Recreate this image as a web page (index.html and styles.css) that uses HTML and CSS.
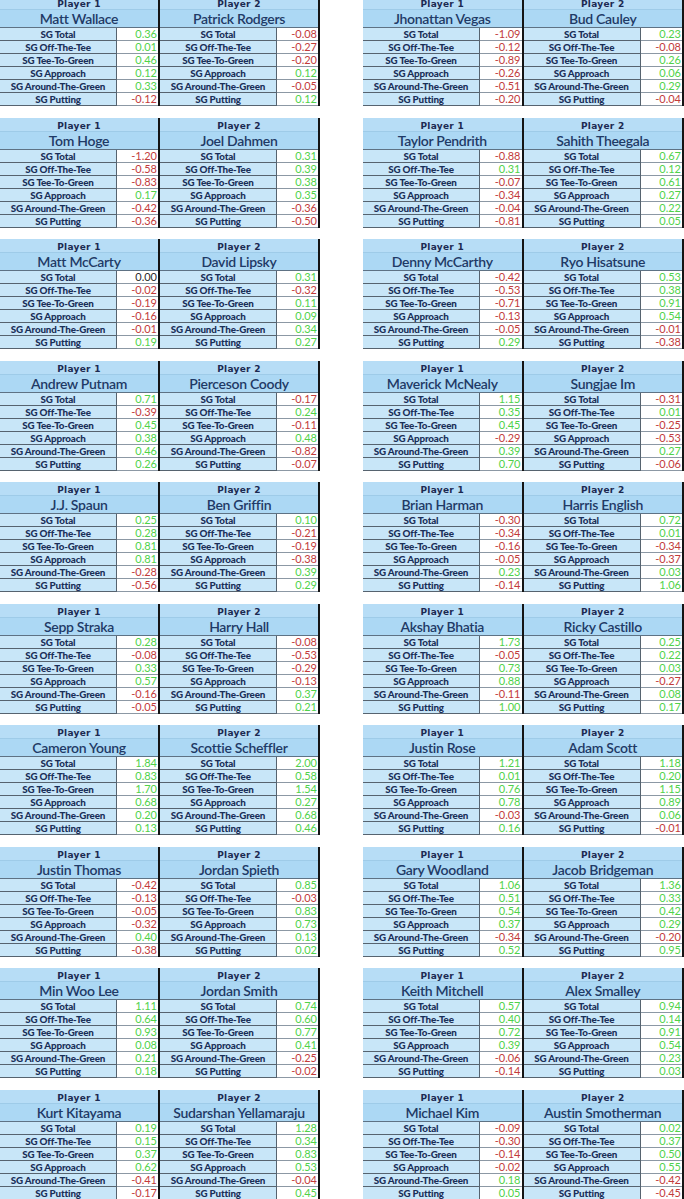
FILE: index.html
```html
<!DOCTYPE html>
<html>
<head>
<meta charset="utf-8">
<link rel="stylesheet" href="styles.css">
</head>
<body>
<div class="page">

<div class="pair">
 <div class="match">
  <div class="player"><div class="ph">Player 1</div><div class="pn">Matt Wallace</div>
   <div class="st"><span class="lb">SG Total</span><span class="v g">0.36</span></div>
   <div class="st"><span class="lb">SG Off-The-Tee</span><span class="v g">0.01</span></div>
   <div class="st"><span class="lb">SG Tee-To-Green</span><span class="v g">0.46</span></div>
   <div class="st"><span class="lb">SG Approach</span><span class="v g">0.12</span></div>
   <div class="st"><span class="lb">SG Around-The-Green</span><span class="v g">0.33</span></div>
   <div class="st"><span class="lb">SG Putting</span><span class="v r">-0.12</span></div>
  </div>
  <div class="player"><div class="ph">Player 2</div><div class="pn">Patrick Rodgers</div>
   <div class="st"><span class="lb">SG Total</span><span class="v r">-0.08</span></div>
   <div class="st"><span class="lb">SG Off-The-Tee</span><span class="v r">-0.27</span></div>
   <div class="st"><span class="lb">SG Tee-To-Green</span><span class="v r">-0.20</span></div>
   <div class="st"><span class="lb">SG Approach</span><span class="v g">0.12</span></div>
   <div class="st"><span class="lb">SG Around-The-Green</span><span class="v r">-0.05</span></div>
   <div class="st"><span class="lb">SG Putting</span><span class="v g">0.12</span></div>
  </div>
 </div>
 <div class="match right">
  <div class="player"><div class="ph">Player 1</div><div class="pn">Jhonattan Vegas</div>
   <div class="st"><span class="lb">SG Total</span><span class="v r">-1.09</span></div>
   <div class="st"><span class="lb">SG Off-The-Tee</span><span class="v r">-0.12</span></div>
   <div class="st"><span class="lb">SG Tee-To-Green</span><span class="v r">-0.89</span></div>
   <div class="st"><span class="lb">SG Approach</span><span class="v r">-0.26</span></div>
   <div class="st"><span class="lb">SG Around-The-Green</span><span class="v r">-0.51</span></div>
   <div class="st"><span class="lb">SG Putting</span><span class="v r">-0.20</span></div>
  </div>
  <div class="player"><div class="ph">Player 2</div><div class="pn">Bud Cauley</div>
   <div class="st"><span class="lb">SG Total</span><span class="v g">0.23</span></div>
   <div class="st"><span class="lb">SG Off-The-Tee</span><span class="v r">-0.08</span></div>
   <div class="st"><span class="lb">SG Tee-To-Green</span><span class="v g">0.26</span></div>
   <div class="st"><span class="lb">SG Approach</span><span class="v g">0.06</span></div>
   <div class="st"><span class="lb">SG Around-The-Green</span><span class="v g">0.29</span></div>
   <div class="st"><span class="lb">SG Putting</span><span class="v r">-0.04</span></div>
  </div>
 </div>
</div>

<div class="pair">
 <div class="match">
  <div class="player"><div class="ph">Player 1</div><div class="pn">Tom Hoge</div>
   <div class="st"><span class="lb">SG Total</span><span class="v r">-1.20</span></div>
   <div class="st"><span class="lb">SG Off-The-Tee</span><span class="v r">-0.58</span></div>
   <div class="st"><span class="lb">SG Tee-To-Green</span><span class="v r">-0.83</span></div>
   <div class="st"><span class="lb">SG Approach</span><span class="v g">0.17</span></div>
   <div class="st"><span class="lb">SG Around-The-Green</span><span class="v r">-0.42</span></div>
   <div class="st"><span class="lb">SG Putting</span><span class="v r">-0.36</span></div>
  </div>
  <div class="player"><div class="ph">Player 2</div><div class="pn">Joel Dahmen</div>
   <div class="st"><span class="lb">SG Total</span><span class="v g">0.31</span></div>
   <div class="st"><span class="lb">SG Off-The-Tee</span><span class="v g">0.39</span></div>
   <div class="st"><span class="lb">SG Tee-To-Green</span><span class="v g">0.38</span></div>
   <div class="st"><span class="lb">SG Approach</span><span class="v g">0.35</span></div>
   <div class="st"><span class="lb">SG Around-The-Green</span><span class="v r">-0.36</span></div>
   <div class="st"><span class="lb">SG Putting</span><span class="v r">-0.50</span></div>
  </div>
 </div>
 <div class="match right">
  <div class="player"><div class="ph">Player 1</div><div class="pn">Taylor Pendrith</div>
   <div class="st"><span class="lb">SG Total</span><span class="v r">-0.88</span></div>
   <div class="st"><span class="lb">SG Off-The-Tee</span><span class="v g">0.31</span></div>
   <div class="st"><span class="lb">SG Tee-To-Green</span><span class="v r">-0.07</span></div>
   <div class="st"><span class="lb">SG Approach</span><span class="v r">-0.34</span></div>
   <div class="st"><span class="lb">SG Around-The-Green</span><span class="v r">-0.04</span></div>
   <div class="st"><span class="lb">SG Putting</span><span class="v r">-0.81</span></div>
  </div>
  <div class="player"><div class="ph">Player 2</div><div class="pn">Sahith Theegala</div>
   <div class="st"><span class="lb">SG Total</span><span class="v g">0.67</span></div>
   <div class="st"><span class="lb">SG Off-The-Tee</span><span class="v g">0.12</span></div>
   <div class="st"><span class="lb">SG Tee-To-Green</span><span class="v g">0.61</span></div>
   <div class="st"><span class="lb">SG Approach</span><span class="v g">0.27</span></div>
   <div class="st"><span class="lb">SG Around-The-Green</span><span class="v g">0.22</span></div>
   <div class="st"><span class="lb">SG Putting</span><span class="v g">0.05</span></div>
  </div>
 </div>
</div>

<div class="pair">
 <div class="match">
  <div class="player"><div class="ph">Player 1</div><div class="pn">Matt McCarty</div>
   <div class="st"><span class="lb">SG Total</span><span class="v k">0.00</span></div>
   <div class="st"><span class="lb">SG Off-The-Tee</span><span class="v r">-0.02</span></div>
   <div class="st"><span class="lb">SG Tee-To-Green</span><span class="v r">-0.19</span></div>
   <div class="st"><span class="lb">SG Approach</span><span class="v r">-0.16</span></div>
   <div class="st"><span class="lb">SG Around-The-Green</span><span class="v r">-0.01</span></div>
   <div class="st"><span class="lb">SG Putting</span><span class="v g">0.19</span></div>
  </div>
  <div class="player"><div class="ph">Player 2</div><div class="pn">David Lipsky</div>
   <div class="st"><span class="lb">SG Total</span><span class="v g">0.31</span></div>
   <div class="st"><span class="lb">SG Off-The-Tee</span><span class="v r">-0.32</span></div>
   <div class="st"><span class="lb">SG Tee-To-Green</span><span class="v g">0.11</span></div>
   <div class="st"><span class="lb">SG Approach</span><span class="v g">0.09</span></div>
   <div class="st"><span class="lb">SG Around-The-Green</span><span class="v g">0.34</span></div>
   <div class="st"><span class="lb">SG Putting</span><span class="v g">0.27</span></div>
  </div>
 </div>
 <div class="match right">
  <div class="player"><div class="ph">Player 1</div><div class="pn">Denny McCarthy</div>
   <div class="st"><span class="lb">SG Total</span><span class="v r">-0.42</span></div>
   <div class="st"><span class="lb">SG Off-The-Tee</span><span class="v r">-0.53</span></div>
   <div class="st"><span class="lb">SG Tee-To-Green</span><span class="v r">-0.71</span></div>
   <div class="st"><span class="lb">SG Approach</span><span class="v r">-0.13</span></div>
   <div class="st"><span class="lb">SG Around-The-Green</span><span class="v r">-0.05</span></div>
   <div class="st"><span class="lb">SG Putting</span><span class="v g">0.29</span></div>
  </div>
  <div class="player"><div class="ph">Player 2</div><div class="pn">Ryo Hisatsune</div>
   <div class="st"><span class="lb">SG Total</span><span class="v g">0.53</span></div>
   <div class="st"><span class="lb">SG Off-The-Tee</span><span class="v g">0.38</span></div>
   <div class="st"><span class="lb">SG Tee-To-Green</span><span class="v g">0.91</span></div>
   <div class="st"><span class="lb">SG Approach</span><span class="v g">0.54</span></div>
   <div class="st"><span class="lb">SG Around-The-Green</span><span class="v r">-0.01</span></div>
   <div class="st"><span class="lb">SG Putting</span><span class="v r">-0.38</span></div>
  </div>
 </div>
</div>

<div class="pair">
 <div class="match">
  <div class="player"><div class="ph">Player 1</div><div class="pn">Andrew Putnam</div>
   <div class="st"><span class="lb">SG Total</span><span class="v g">0.71</span></div>
   <div class="st"><span class="lb">SG Off-The-Tee</span><span class="v r">-0.39</span></div>
   <div class="st"><span class="lb">SG Tee-To-Green</span><span class="v g">0.45</span></div>
   <div class="st"><span class="lb">SG Approach</span><span class="v g">0.38</span></div>
   <div class="st"><span class="lb">SG Around-The-Green</span><span class="v g">0.46</span></div>
   <div class="st"><span class="lb">SG Putting</span><span class="v g">0.26</span></div>
  </div>
  <div class="player"><div class="ph">Player 2</div><div class="pn">Pierceson Coody</div>
   <div class="st"><span class="lb">SG Total</span><span class="v r">-0.17</span></div>
   <div class="st"><span class="lb">SG Off-The-Tee</span><span class="v g">0.24</span></div>
   <div class="st"><span class="lb">SG Tee-To-Green</span><span class="v r">-0.11</span></div>
   <div class="st"><span class="lb">SG Approach</span><span class="v g">0.48</span></div>
   <div class="st"><span class="lb">SG Around-The-Green</span><span class="v r">-0.82</span></div>
   <div class="st"><span class="lb">SG Putting</span><span class="v r">-0.07</span></div>
  </div>
 </div>
 <div class="match right">
  <div class="player"><div class="ph">Player 1</div><div class="pn">Maverick McNealy</div>
   <div class="st"><span class="lb">SG Total</span><span class="v g">1.15</span></div>
   <div class="st"><span class="lb">SG Off-The-Tee</span><span class="v g">0.35</span></div>
   <div class="st"><span class="lb">SG Tee-To-Green</span><span class="v g">0.45</span></div>
   <div class="st"><span class="lb">SG Approach</span><span class="v r">-0.29</span></div>
   <div class="st"><span class="lb">SG Around-The-Green</span><span class="v g">0.39</span></div>
   <div class="st"><span class="lb">SG Putting</span><span class="v g">0.70</span></div>
  </div>
  <div class="player"><div class="ph">Player 2</div><div class="pn">Sungjae Im</div>
   <div class="st"><span class="lb">SG Total</span><span class="v r">-0.31</span></div>
   <div class="st"><span class="lb">SG Off-The-Tee</span><span class="v g">0.01</span></div>
   <div class="st"><span class="lb">SG Tee-To-Green</span><span class="v r">-0.25</span></div>
   <div class="st"><span class="lb">SG Approach</span><span class="v r">-0.53</span></div>
   <div class="st"><span class="lb">SG Around-The-Green</span><span class="v g">0.27</span></div>
   <div class="st"><span class="lb">SG Putting</span><span class="v r">-0.06</span></div>
  </div>
 </div>
</div>

<div class="pair">
 <div class="match">
  <div class="player"><div class="ph">Player 1</div><div class="pn">J.J. Spaun</div>
   <div class="st"><span class="lb">SG Total</span><span class="v g">0.25</span></div>
   <div class="st"><span class="lb">SG Off-The-Tee</span><span class="v g">0.28</span></div>
   <div class="st"><span class="lb">SG Tee-To-Green</span><span class="v g">0.81</span></div>
   <div class="st"><span class="lb">SG Approach</span><span class="v g">0.81</span></div>
   <div class="st"><span class="lb">SG Around-The-Green</span><span class="v r">-0.28</span></div>
   <div class="st"><span class="lb">SG Putting</span><span class="v r">-0.56</span></div>
  </div>
  <div class="player"><div class="ph">Player 2</div><div class="pn">Ben Griffin</div>
   <div class="st"><span class="lb">SG Total</span><span class="v g">0.10</span></div>
   <div class="st"><span class="lb">SG Off-The-Tee</span><span class="v r">-0.21</span></div>
   <div class="st"><span class="lb">SG Tee-To-Green</span><span class="v r">-0.19</span></div>
   <div class="st"><span class="lb">SG Approach</span><span class="v r">-0.38</span></div>
   <div class="st"><span class="lb">SG Around-The-Green</span><span class="v g">0.39</span></div>
   <div class="st"><span class="lb">SG Putting</span><span class="v g">0.29</span></div>
  </div>
 </div>
 <div class="match right">
  <div class="player"><div class="ph">Player 1</div><div class="pn">Brian Harman</div>
   <div class="st"><span class="lb">SG Total</span><span class="v r">-0.30</span></div>
   <div class="st"><span class="lb">SG Off-The-Tee</span><span class="v r">-0.34</span></div>
   <div class="st"><span class="lb">SG Tee-To-Green</span><span class="v r">-0.16</span></div>
   <div class="st"><span class="lb">SG Approach</span><span class="v r">-0.05</span></div>
   <div class="st"><span class="lb">SG Around-The-Green</span><span class="v g">0.23</span></div>
   <div class="st"><span class="lb">SG Putting</span><span class="v r">-0.14</span></div>
  </div>
  <div class="player"><div class="ph">Player 2</div><div class="pn">Harris English</div>
   <div class="st"><span class="lb">SG Total</span><span class="v g">0.72</span></div>
   <div class="st"><span class="lb">SG Off-The-Tee</span><span class="v g">0.01</span></div>
   <div class="st"><span class="lb">SG Tee-To-Green</span><span class="v r">-0.34</span></div>
   <div class="st"><span class="lb">SG Approach</span><span class="v r">-0.37</span></div>
   <div class="st"><span class="lb">SG Around-The-Green</span><span class="v g">0.03</span></div>
   <div class="st"><span class="lb">SG Putting</span><span class="v g">1.06</span></div>
  </div>
 </div>
</div>

<div class="pair">
 <div class="match">
  <div class="player"><div class="ph">Player 1</div><div class="pn">Sepp Straka</div>
   <div class="st"><span class="lb">SG Total</span><span class="v g">0.28</span></div>
   <div class="st"><span class="lb">SG Off-The-Tee</span><span class="v r">-0.08</span></div>
   <div class="st"><span class="lb">SG Tee-To-Green</span><span class="v g">0.33</span></div>
   <div class="st"><span class="lb">SG Approach</span><span class="v g">0.57</span></div>
   <div class="st"><span class="lb">SG Around-The-Green</span><span class="v r">-0.16</span></div>
   <div class="st"><span class="lb">SG Putting</span><span class="v r">-0.05</span></div>
  </div>
  <div class="player"><div class="ph">Player 2</div><div class="pn">Harry Hall</div>
   <div class="st"><span class="lb">SG Total</span><span class="v r">-0.08</span></div>
   <div class="st"><span class="lb">SG Off-The-Tee</span><span class="v r">-0.53</span></div>
   <div class="st"><span class="lb">SG Tee-To-Green</span><span class="v r">-0.29</span></div>
   <div class="st"><span class="lb">SG Approach</span><span class="v r">-0.13</span></div>
   <div class="st"><span class="lb">SG Around-The-Green</span><span class="v g">0.37</span></div>
   <div class="st"><span class="lb">SG Putting</span><span class="v g">0.21</span></div>
  </div>
 </div>
 <div class="match right">
  <div class="player"><div class="ph">Player 1</div><div class="pn">Akshay Bhatia</div>
   <div class="st"><span class="lb">SG Total</span><span class="v g">1.73</span></div>
   <div class="st"><span class="lb">SG Off-The-Tee</span><span class="v r">-0.05</span></div>
   <div class="st"><span class="lb">SG Tee-To-Green</span><span class="v g">0.73</span></div>
   <div class="st"><span class="lb">SG Approach</span><span class="v g">0.88</span></div>
   <div class="st"><span class="lb">SG Around-The-Green</span><span class="v r">-0.11</span></div>
   <div class="st"><span class="lb">SG Putting</span><span class="v g">1.00</span></div>
  </div>
  <div class="player"><div class="ph">Player 2</div><div class="pn">Ricky Castillo</div>
   <div class="st"><span class="lb">SG Total</span><span class="v g">0.25</span></div>
   <div class="st"><span class="lb">SG Off-The-Tee</span><span class="v g">0.22</span></div>
   <div class="st"><span class="lb">SG Tee-To-Green</span><span class="v g">0.03</span></div>
   <div class="st"><span class="lb">SG Approach</span><span class="v r">-0.27</span></div>
   <div class="st"><span class="lb">SG Around-The-Green</span><span class="v g">0.08</span></div>
   <div class="st"><span class="lb">SG Putting</span><span class="v g">0.17</span></div>
  </div>
 </div>
</div>

<div class="pair">
 <div class="match">
  <div class="player"><div class="ph">Player 1</div><div class="pn">Cameron Young</div>
   <div class="st"><span class="lb">SG Total</span><span class="v g">1.84</span></div>
   <div class="st"><span class="lb">SG Off-The-Tee</span><span class="v g">0.83</span></div>
   <div class="st"><span class="lb">SG Tee-To-Green</span><span class="v g">1.70</span></div>
   <div class="st"><span class="lb">SG Approach</span><span class="v g">0.68</span></div>
   <div class="st"><span class="lb">SG Around-The-Green</span><span class="v g">0.20</span></div>
   <div class="st"><span class="lb">SG Putting</span><span class="v g">0.13</span></div>
  </div>
  <div class="player"><div class="ph">Player 2</div><div class="pn">Scottie Scheffler</div>
   <div class="st"><span class="lb">SG Total</span><span class="v g">2.00</span></div>
   <div class="st"><span class="lb">SG Off-The-Tee</span><span class="v g">0.58</span></div>
   <div class="st"><span class="lb">SG Tee-To-Green</span><span class="v g">1.54</span></div>
   <div class="st"><span class="lb">SG Approach</span><span class="v g">0.27</span></div>
   <div class="st"><span class="lb">SG Around-The-Green</span><span class="v g">0.68</span></div>
   <div class="st"><span class="lb">SG Putting</span><span class="v g">0.46</span></div>
  </div>
 </div>
 <div class="match right">
  <div class="player"><div class="ph">Player 1</div><div class="pn">Justin Rose</div>
   <div class="st"><span class="lb">SG Total</span><span class="v g">1.21</span></div>
   <div class="st"><span class="lb">SG Off-The-Tee</span><span class="v g">0.01</span></div>
   <div class="st"><span class="lb">SG Tee-To-Green</span><span class="v g">0.76</span></div>
   <div class="st"><span class="lb">SG Approach</span><span class="v g">0.78</span></div>
   <div class="st"><span class="lb">SG Around-The-Green</span><span class="v r">-0.03</span></div>
   <div class="st"><span class="lb">SG Putting</span><span class="v g">0.16</span></div>
  </div>
  <div class="player"><div class="ph">Player 2</div><div class="pn">Adam Scott</div>
   <div class="st"><span class="lb">SG Total</span><span class="v g">1.18</span></div>
   <div class="st"><span class="lb">SG Off-The-Tee</span><span class="v g">0.20</span></div>
   <div class="st"><span class="lb">SG Tee-To-Green</span><span class="v g">1.15</span></div>
   <div class="st"><span class="lb">SG Approach</span><span class="v g">0.89</span></div>
   <div class="st"><span class="lb">SG Around-The-Green</span><span class="v g">0.06</span></div>
   <div class="st"><span class="lb">SG Putting</span><span class="v r">-0.01</span></div>
  </div>
 </div>
</div>

<div class="pair">
 <div class="match">
  <div class="player"><div class="ph">Player 1</div><div class="pn">Justin Thomas</div>
   <div class="st"><span class="lb">SG Total</span><span class="v r">-0.42</span></div>
   <div class="st"><span class="lb">SG Off-The-Tee</span><span class="v r">-0.13</span></div>
   <div class="st"><span class="lb">SG Tee-To-Green</span><span class="v r">-0.05</span></div>
   <div class="st"><span class="lb">SG Approach</span><span class="v r">-0.32</span></div>
   <div class="st"><span class="lb">SG Around-The-Green</span><span class="v g">0.40</span></div>
   <div class="st"><span class="lb">SG Putting</span><span class="v r">-0.38</span></div>
  </div>
  <div class="player"><div class="ph">Player 2</div><div class="pn">Jordan Spieth</div>
   <div class="st"><span class="lb">SG Total</span><span class="v g">0.85</span></div>
   <div class="st"><span class="lb">SG Off-The-Tee</span><span class="v r">-0.03</span></div>
   <div class="st"><span class="lb">SG Tee-To-Green</span><span class="v g">0.83</span></div>
   <div class="st"><span class="lb">SG Approach</span><span class="v g">0.73</span></div>
   <div class="st"><span class="lb">SG Around-The-Green</span><span class="v g">0.13</span></div>
   <div class="st"><span class="lb">SG Putting</span><span class="v g">0.02</span></div>
  </div>
 </div>
 <div class="match right">
  <div class="player"><div class="ph">Player 1</div><div class="pn">Gary Woodland</div>
   <div class="st"><span class="lb">SG Total</span><span class="v g">1.06</span></div>
   <div class="st"><span class="lb">SG Off-The-Tee</span><span class="v g">0.51</span></div>
   <div class="st"><span class="lb">SG Tee-To-Green</span><span class="v g">0.54</span></div>
   <div class="st"><span class="lb">SG Approach</span><span class="v g">0.37</span></div>
   <div class="st"><span class="lb">SG Around-The-Green</span><span class="v r">-0.34</span></div>
   <div class="st"><span class="lb">SG Putting</span><span class="v g">0.52</span></div>
  </div>
  <div class="player"><div class="ph">Player 2</div><div class="pn">Jacob Bridgeman</div>
   <div class="st"><span class="lb">SG Total</span><span class="v g">1.36</span></div>
   <div class="st"><span class="lb">SG Off-The-Tee</span><span class="v g">0.33</span></div>
   <div class="st"><span class="lb">SG Tee-To-Green</span><span class="v g">0.42</span></div>
   <div class="st"><span class="lb">SG Approach</span><span class="v g">0.29</span></div>
   <div class="st"><span class="lb">SG Around-The-Green</span><span class="v r">-0.20</span></div>
   <div class="st"><span class="lb">SG Putting</span><span class="v g">0.95</span></div>
  </div>
 </div>
</div>

<div class="pair">
 <div class="match">
  <div class="player"><div class="ph">Player 1</div><div class="pn">Min Woo Lee</div>
   <div class="st"><span class="lb">SG Total</span><span class="v g">1.11</span></div>
   <div class="st"><span class="lb">SG Off-The-Tee</span><span class="v g">0.64</span></div>
   <div class="st"><span class="lb">SG Tee-To-Green</span><span class="v g">0.93</span></div>
   <div class="st"><span class="lb">SG Approach</span><span class="v g">0.08</span></div>
   <div class="st"><span class="lb">SG Around-The-Green</span><span class="v g">0.21</span></div>
   <div class="st"><span class="lb">SG Putting</span><span class="v g">0.18</span></div>
  </div>
  <div class="player"><div class="ph">Player 2</div><div class="pn">Jordan Smith</div>
   <div class="st"><span class="lb">SG Total</span><span class="v g">0.74</span></div>
   <div class="st"><span class="lb">SG Off-The-Tee</span><span class="v g">0.60</span></div>
   <div class="st"><span class="lb">SG Tee-To-Green</span><span class="v g">0.77</span></div>
   <div class="st"><span class="lb">SG Approach</span><span class="v g">0.41</span></div>
   <div class="st"><span class="lb">SG Around-The-Green</span><span class="v r">-0.25</span></div>
   <div class="st"><span class="lb">SG Putting</span><span class="v r">-0.02</span></div>
  </div>
 </div>
 <div class="match right">
  <div class="player"><div class="ph">Player 1</div><div class="pn">Keith Mitchell</div>
   <div class="st"><span class="lb">SG Total</span><span class="v g">0.57</span></div>
   <div class="st"><span class="lb">SG Off-The-Tee</span><span class="v g">0.40</span></div>
   <div class="st"><span class="lb">SG Tee-To-Green</span><span class="v g">0.72</span></div>
   <div class="st"><span class="lb">SG Approach</span><span class="v g">0.39</span></div>
   <div class="st"><span class="lb">SG Around-The-Green</span><span class="v r">-0.06</span></div>
   <div class="st"><span class="lb">SG Putting</span><span class="v r">-0.14</span></div>
  </div>
  <div class="player"><div class="ph">Player 2</div><div class="pn">Alex Smalley</div>
   <div class="st"><span class="lb">SG Total</span><span class="v g">0.94</span></div>
   <div class="st"><span class="lb">SG Off-The-Tee</span><span class="v g">0.14</span></div>
   <div class="st"><span class="lb">SG Tee-To-Green</span><span class="v g">0.91</span></div>
   <div class="st"><span class="lb">SG Approach</span><span class="v g">0.54</span></div>
   <div class="st"><span class="lb">SG Around-The-Green</span><span class="v g">0.23</span></div>
   <div class="st"><span class="lb">SG Putting</span><span class="v g">0.03</span></div>
  </div>
 </div>
</div>

<div class="pair">
 <div class="match">
  <div class="player"><div class="ph">Player 1</div><div class="pn">Kurt Kitayama</div>
   <div class="st"><span class="lb">SG Total</span><span class="v g">0.19</span></div>
   <div class="st"><span class="lb">SG Off-The-Tee</span><span class="v g">0.15</span></div>
   <div class="st"><span class="lb">SG Tee-To-Green</span><span class="v g">0.37</span></div>
   <div class="st"><span class="lb">SG Approach</span><span class="v g">0.62</span></div>
   <div class="st"><span class="lb">SG Around-The-Green</span><span class="v r">-0.41</span></div>
   <div class="st"><span class="lb">SG Putting</span><span class="v r">-0.17</span></div>
  </div>
  <div class="player"><div class="ph">Player 2</div><div class="pn">Sudarshan Yellamaraju</div>
   <div class="st"><span class="lb">SG Total</span><span class="v g">1.28</span></div>
   <div class="st"><span class="lb">SG Off-The-Tee</span><span class="v g">0.34</span></div>
   <div class="st"><span class="lb">SG Tee-To-Green</span><span class="v g">0.83</span></div>
   <div class="st"><span class="lb">SG Approach</span><span class="v g">0.53</span></div>
   <div class="st"><span class="lb">SG Around-The-Green</span><span class="v r">-0.04</span></div>
   <div class="st"><span class="lb">SG Putting</span><span class="v g">0.45</span></div>
  </div>
 </div>
 <div class="match right">
  <div class="player"><div class="ph">Player 1</div><div class="pn">Michael Kim</div>
   <div class="st"><span class="lb">SG Total</span><span class="v r">-0.09</span></div>
   <div class="st"><span class="lb">SG Off-The-Tee</span><span class="v r">-0.30</span></div>
   <div class="st"><span class="lb">SG Tee-To-Green</span><span class="v r">-0.14</span></div>
   <div class="st"><span class="lb">SG Approach</span><span class="v r">-0.02</span></div>
   <div class="st"><span class="lb">SG Around-The-Green</span><span class="v g">0.18</span></div>
   <div class="st"><span class="lb">SG Putting</span><span class="v g">0.05</span></div>
  </div>
  <div class="player"><div class="ph">Player 2</div><div class="pn">Austin Smotherman</div>
   <div class="st"><span class="lb">SG Total</span><span class="v g">0.02</span></div>
   <div class="st"><span class="lb">SG Off-The-Tee</span><span class="v g">0.37</span></div>
   <div class="st"><span class="lb">SG Tee-To-Green</span><span class="v g">0.50</span></div>
   <div class="st"><span class="lb">SG Approach</span><span class="v g">0.55</span></div>
   <div class="st"><span class="lb">SG Around-The-Green</span><span class="v r">-0.42</span></div>
   <div class="st"><span class="lb">SG Putting</span><span class="v r">-0.45</span></div>
  </div>
 </div>
</div>

</div>
</body>
</html>
```

FILE: styles.css
```css
* {
  box-sizing: border-box;
  margin: 0;
  padding: 0;
}

html, body {
  background: #ffffff;
}

body {
  margin: 0;
  overflow: hidden;
  font-family: Lato, "Open Sans", sans-serif;
}

.page {
  display: flex;
  flex-direction: column;
  gap: 11.5px;
  margin-top: -4px;
}

.pair {
  display: flex;
  gap: 43px;
}

.match {
  display: flex;
  width: 320px;
}

.match.right {
  width: 321px;
}

.player {
  flex: 1;
  display: flex;
  flex-direction: column;
  border-right: 2px solid #141414;
}

.ph {
  height: 14px;
  padding-top: 3px;
  background: #b7ddf6;
  border-bottom: 1px solid #9ecbe8;
  text-align: center;
  font-family: "DejaVu Sans", sans-serif;
  font-weight: bold;
  font-size: 9px;
  line-height: 10px;
  color: #1c2a52;
  letter-spacing: 0.3px;
}

.pn {
  height: 18px;
  background: #acd8f4;
  border-bottom: 1px solid #5e7284;
  text-align: center;
  font-size: 14px;
  font-weight: 600;
  line-height: 17px;
  letter-spacing: -0.3px;
  color: #1f3a66;
  white-space: nowrap;
}

.st {
  display: flex;
  height: 13px;
}

.lb {
  width: 117px;
  flex: none;
  background: #c8e6f8;
  border-bottom: 1px solid #56636f;
  border-right: 1px solid #56636f;
  text-align: center;
  font-weight: 900;
  font-size: 9.8px;
  line-height: 12px;
  letter-spacing: -0.15px;
  color: #1a2f58;
  white-space: nowrap;
}

.v {
  flex: 1;
  background: #ffffff;
  border-bottom: 1px solid #8c98a4;
  text-align: right;
  font-size: 11px;
  line-height: 12px;
  padding-right: 1px;
}

.g {
  color: #4fd24a;
}

.r {
  color: #c23b3b;
}

.k {
  color: #2b2b2b;
}
```
